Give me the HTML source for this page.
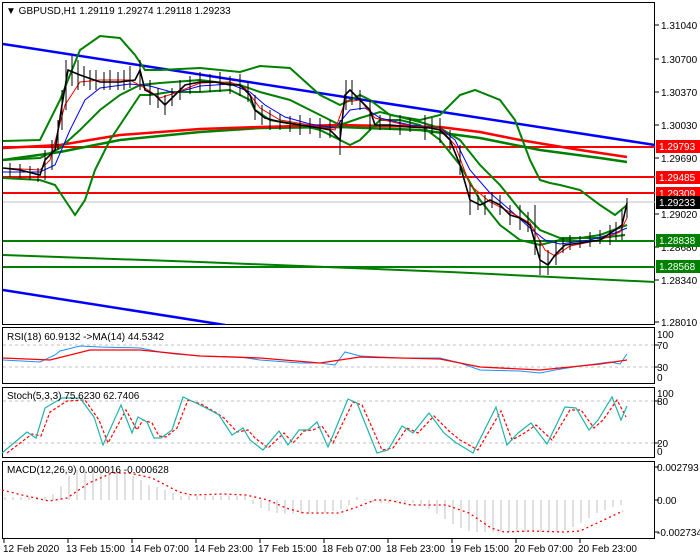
<!DOCTYPE html>
<html><head><meta charset="utf-8"><style>
body{margin:0;background:#fff;}
svg{display:block;font-family:"Liberation Sans",sans-serif;font-size:10px;}
</style></head><body>
<svg width="700" height="560" viewBox="0 0 700 560" xmlns="http://www.w3.org/2000/svg">
<rect width="700" height="560" fill="#fff"/>
<g fill="none" stroke="#000" stroke-width="1">
<rect x="2.5" y="2.5" width="652" height="322"/>
<rect x="2.5" y="327.5" width="652" height="56"/>
<rect x="2.5" y="387.5" width="652" height="70"/>
<rect x="2.5" y="461.5" width="652" height="77"/>
</g>
<g stroke="#000">
<path d="M655 25h4M655 59h4M655 92h4M655 125h4M655 158h4M655 214h4M655 247h4M655 280h4M655 322h4M655 345h4M655 367h4M655 401h4M655 443h4M655 467h4M655 500h4M655 532h4"/>
<path d="M4 539v4M68 539v4M132 539v4M196 539v4M260 539v4M324 539v4M388 539v4M452 539v4M516 539v4M580 539v4"/>
</g>
<g fill="#000">
<text x="661" y="29">1.31040</text>
<text x="661" y="63">1.30700</text>
<text x="661" y="96">1.30370</text>
<text x="661" y="129">1.30030</text>
<text x="661" y="162">1.29690</text>
<text x="661" y="218">1.29020</text>
<text x="661" y="251">1.28680</text>
<text x="661" y="284">1.28340</text>
<text x="661" y="326">1.28010</text>
<text x="657" y="338">100</text>
<text x="657" y="349">70</text>
<text x="657" y="371">30</text>
<text x="657" y="381">0</text>
<text x="657" y="397">100</text>
<text x="657" y="405">80</text>
<text x="657" y="447">20</text>
<text x="657" y="455">0</text>
<text x="657" y="471">0.002793</text>
<text x="657" y="504">0.00</text>
<text x="657" y="536">-0.002734</text>
</g>
<rect x="656" y="140" width="44" height="13" fill="#ff0000"/><text x="659" y="150" fill="#fff">1.29793</text>
<rect x="656" y="171" width="44" height="13" fill="#ff0000"/><text x="659" y="181" fill="#fff">1.29485</text>
<rect x="656" y="187" width="44" height="13" fill="#ff0000"/><text x="659" y="197" fill="#fff">1.29309</text>
<rect x="656" y="196" width="44" height="13" fill="#000"/><text x="659" y="206" fill="#fff">1.29233</text>
<rect x="656" y="234" width="44" height="13" fill="#008000"/><text x="659" y="244" fill="#fff">1.28838</text>
<rect x="656" y="260" width="44" height="13" fill="#008000"/><text x="659" y="270" fill="#fff">1.28568</text>

<svg x="3" y="3" width="652" height="322" viewBox="3 3 652 322" overflow="hidden">
<line x1="3" y1="202" x2="655" y2="202" stroke="#c0c0c0"/>
<g stroke="#ff0000" stroke-width="2">
<line x1="3" y1="147" x2="655" y2="147"/>
<line x1="3" y1="177" x2="655" y2="177"/>
<line x1="3" y1="193" x2="655" y2="193"/>
</g>
<g stroke="#008000" stroke-width="2">
<line x1="3" y1="241" x2="655" y2="241"/>
<line x1="3" y1="267" x2="655" y2="267"/>
</g>
<polyline fill="none" stroke="#008000" stroke-width="2" points="3,255 200,262 450,272 655,282"/>
<polyline fill="none" stroke="#0000ff" stroke-width="2.5" points="3,44 655,145"/>
<polyline fill="none" stroke="#0000ff" stroke-width="2.5" points="3,290 225,325"/>
<polyline fill="none" stroke="#008000" stroke-width="2.5" points="3,160 60,152 120,140 200,132 260,128 340,127 420,130 480,138 540,150 600,158 627,162"/>
<polyline fill="none" stroke="#ff0000" stroke-width="2.5" points="3,148 60,145 120,135 200,129 260,127 340,125 440,127 480,132 520,140 580,150 627,157"/>
<polyline fill="none" stroke="#008000" stroke-width="2" points="3,141 40,140 60,100 80,50 100,36 120,38 135,55 145,70 160,70 200,68 240,72 260,66 290,68 320,95 340,105 350,100 360,95 370,100 390,115 420,120 440,115 460,95 475,90 500,100 515,120 530,160 540,180 550,183 560,185 580,190 600,205 615,215 627,205"/>
<polyline fill="none" stroke="#008000" stroke-width="2" points="3,178 40,180 55,185 65,200 75,215 85,200 95,170 110,140 130,110 140,95 150,95 170,92 200,92 230,90 250,100 255,110 270,120 300,125 320,130 340,140 350,145 360,140 380,120 400,120 420,125 440,140 460,165 480,200 500,225 520,240 540,245 560,240 580,238 600,238 625,235"/>
<polyline fill="none" stroke="#008000" stroke-width="2" points="3,160 40,158 60,148 80,130 100,110 120,95 140,85 160,83 200,80 240,85 260,92 290,100 320,115 340,125 360,118 380,112 420,122 440,128 460,140 480,165 500,185 520,210 540,230 560,238 580,238 600,235 627,225"/>
<polyline fill="none" stroke="#0000ff" stroke-width="1" points="3,172 40,172 55,165 70,130 85,100 100,88 130,84 150,86 175,93 200,86 230,84 250,92 265,105 285,117 310,124 335,128 350,110 365,108 380,118 410,125 440,128 455,140 470,170 490,193 510,210 530,228 545,240 560,244 590,240 615,233 627,228"/>
<polyline fill="none" stroke="#ff0000" stroke-width="1" points="3,168 40,170 50,160 65,105 80,82 100,80 130,80 145,88 160,98 175,93 200,83 230,82 245,88 260,108 280,120 310,125 335,130 345,102 360,100 375,118 410,126 440,128 455,145 470,185 490,202 510,212 530,223 545,250 555,256 570,246 600,240 620,232 627,218"/>
<polyline fill="none" stroke="#000" stroke-width="1.6" points="3,168 20,170 40,175 45,160 55,150 62,105 68,70 80,75 100,82 120,82 135,80 140,70 145,90 155,95 165,105 175,95 185,85 200,82 215,82 230,85 240,85 250,95 255,110 265,118 280,122 300,125 320,128 330,130 340,140 345,95 350,90 360,100 370,110 375,125 390,125 410,127 430,128 440,130 450,140 460,165 470,200 480,205 490,200 500,205 510,215 520,218 530,225 540,260 548,265 555,255 565,245 580,243 600,240 615,230 622,225 627,203"/>
<g stroke="#000" stroke-width="1">
<path d="M10 163v14M20 164v14M30 166v14M38 168v14M45 150v30M52 140v30M58 120v30M62 90v40M66 60v50M72 56v30M78 60v30M84 66v20M90 70v20M96 70v20M104 72v18M110 70v20M118 72v18M124 70v20M130 66v22M140 60v30M150 80v25M158 88v20M165 95v20M172 88v18M180 80v20M190 76v18M200 72v20M210 74v18M220 72v20M230 76v18M240 74v22M248 82v20M255 95v25M262 105v20M270 110v20M280 114v16M290 116v16M300 115v20M310 118v16M320 118v20M330 120v18M340 120v35M346 80v30M352 80v25M360 90v20M370 100v30M380 115v15M390 116v14M400 115v20M410 118v14M425 115v25M432 118v16M440 118v25M450 130v20M460 145v30M470 185v30M478 195v15M485 195v20M492 192v16M500 195v20M510 205v20M520 205v25M528 212v20M535 205v50M540 240v35M548 250v25M556 240v25M563 238v15M570 235v15M580 236v12M590 232v15M600 230v14M610 225v20M616 222v18M622 210v30M627 198v20"/>
</g>
</svg>

<text x="6" y="14" fill="#000">▼ GBPUSD,H1  1.29119 1.29274 1.29118 1.29233</text>

<g stroke="#c0c0c0" stroke-dasharray="3,3"><line x1="3" y1="345" x2="654" y2="345"/><line x1="3" y1="367" x2="654" y2="367"/></g>
<polyline fill="none" stroke="#1e90ff" stroke-width="1" points="3,360 40,362 55,355 60,351 80,346 100,347 140,348 160,352 175,354 200,356 240,357 260,360 300,363 320,363 335,365 345,352 360,356 400,358 440,358 460,363 480,370 520,371 540,373 555,370 580,366 610,362 620,364 627,354"/>
<polyline fill="none" stroke="#ff0000" stroke-width="1.3" points="3,358 50,360 90,350 140,350 200,356 260,358 320,363 360,357 440,359 480,367 540,370 560,368 600,364 627,360"/>
<text x="7" y="340" fill="#000">RSI(18) 60.9132  -&gt;MA(14) 44.5342</text>

<g stroke="#c0c0c0" stroke-dasharray="3,3"><line x1="3" y1="401" x2="654" y2="401"/><line x1="3" y1="443" x2="654" y2="443"/></g>
<polyline fill="none" stroke="#ff0000" stroke-width="1.2" stroke-dasharray="3,2" points="7,453 32,434 41,436 50,412 67,401 85,400 99,420 108,443 126,410 137,430 143,420 152,423 159,436 166,437 177,428 188,400 201,404 215,412 224,418 237,432 248,430 255,438 268,448 284,433 293,443 304,431 313,430 322,426 333,443 353,402 362,405 382,450 393,448 407,428 418,433 434,416 449,431 460,440 478,450 501,411 512,440 523,434 536,425 552,440 570,410 581,410 594,428 603,420 617,400 626,417"/>
<polyline fill="none" stroke="#20b2aa" stroke-width="1.2" points="2,453 27,432 36,438 45,408 62,398 80,398 94,417 103,445 121,405 132,433 138,417 147,422 154,438 161,438 172,430 183,397 196,403 210,410 219,415 232,435 243,428 250,440 263,450 279,431 288,445 299,430 308,430 317,422 328,447 348,399 357,403 377,453 388,450 402,426 413,433 429,413 444,433 455,442 473,453 496,407 507,445 518,433 531,423 547,444 565,407 576,408 589,430 598,420 612,397 621,420 627,406"/>
<text x="7" y="399" fill="#000">Stoch(5,3,3) 75.6230 62.7406</text>

<path stroke="#c0c0c0" stroke-width="1" d="M5 500V497M13 500V497M21 500V497M29 500V497M37 500V497M45 500V497M53 500V494M61 500V486M69 500V476M77 500V470M85 500V470M93 500V470M101 500V470M109 500V470M117 500V470M125 500V472M133 500V476M141 500V480M149 500V485M157 500V487M165 500V490M173 500V493M181 500V496M189 500V496M197 500V496M205 500V496M213 500V496M221 500V496M229 500V496M237 500V496M245 500V496M253 500V504M261 500V508M269 500V511M277 500V513M285 500V514M293 500V514M301 500V514M309 500V514M317 500V514M325 500V513M333 500V511M341 500V509M349 500V505M357 500V497M365 500V499M373 500V502M381 500V503M389 500V503M397 500V503M405 500V503M413 500V503M421 500V504M429 500V509M437 500V514M445 500V519M453 500V524M461 500V528M469 500V531M477 500V532M485 500V532M493 500V532M501 500V532M509 500V532M517 500V532M525 500V532M533 500V532M541 500V532M549 500V532M557 500V532M565 500V530M573 500V527M581 500V523M589 500V518M597 500V513M605 500V510M613 500V507M621 500V505"/>
<polyline fill="none" stroke="#ff0000" stroke-width="1.3" stroke-dasharray="2,3" points="2,490 22,495 49,501 67,498 89,483 112,473 129,473 152,478 179,492 192,495 223,494 246,495 268,500 286,508 304,513 339,513 357,507 375,500 388,500 411,505 446,505 469,513 491,528 504,532 531,531 563,532 580,531 623,511"/>
<text x="7" y="473" fill="#000">MACD(12,26,9) 0.000016 -0.000628</text>

<g fill="#000">
<text x="3" y="552">12 Feb 2020</text>
<text x="66" y="552">13 Feb 15:00</text>
<text x="130" y="552">14 Feb 07:00</text>
<text x="194" y="552">14 Feb 23:00</text>
<text x="258" y="552">17 Feb 15:00</text>
<text x="322" y="552">18 Feb 07:00</text>
<text x="386" y="552">18 Feb 23:00</text>
<text x="450" y="552">19 Feb 15:00</text>
<text x="514" y="552">20 Feb 07:00</text>
<text x="578" y="552">20 Feb 23:00</text>
</g>
</svg>
</body></html>
